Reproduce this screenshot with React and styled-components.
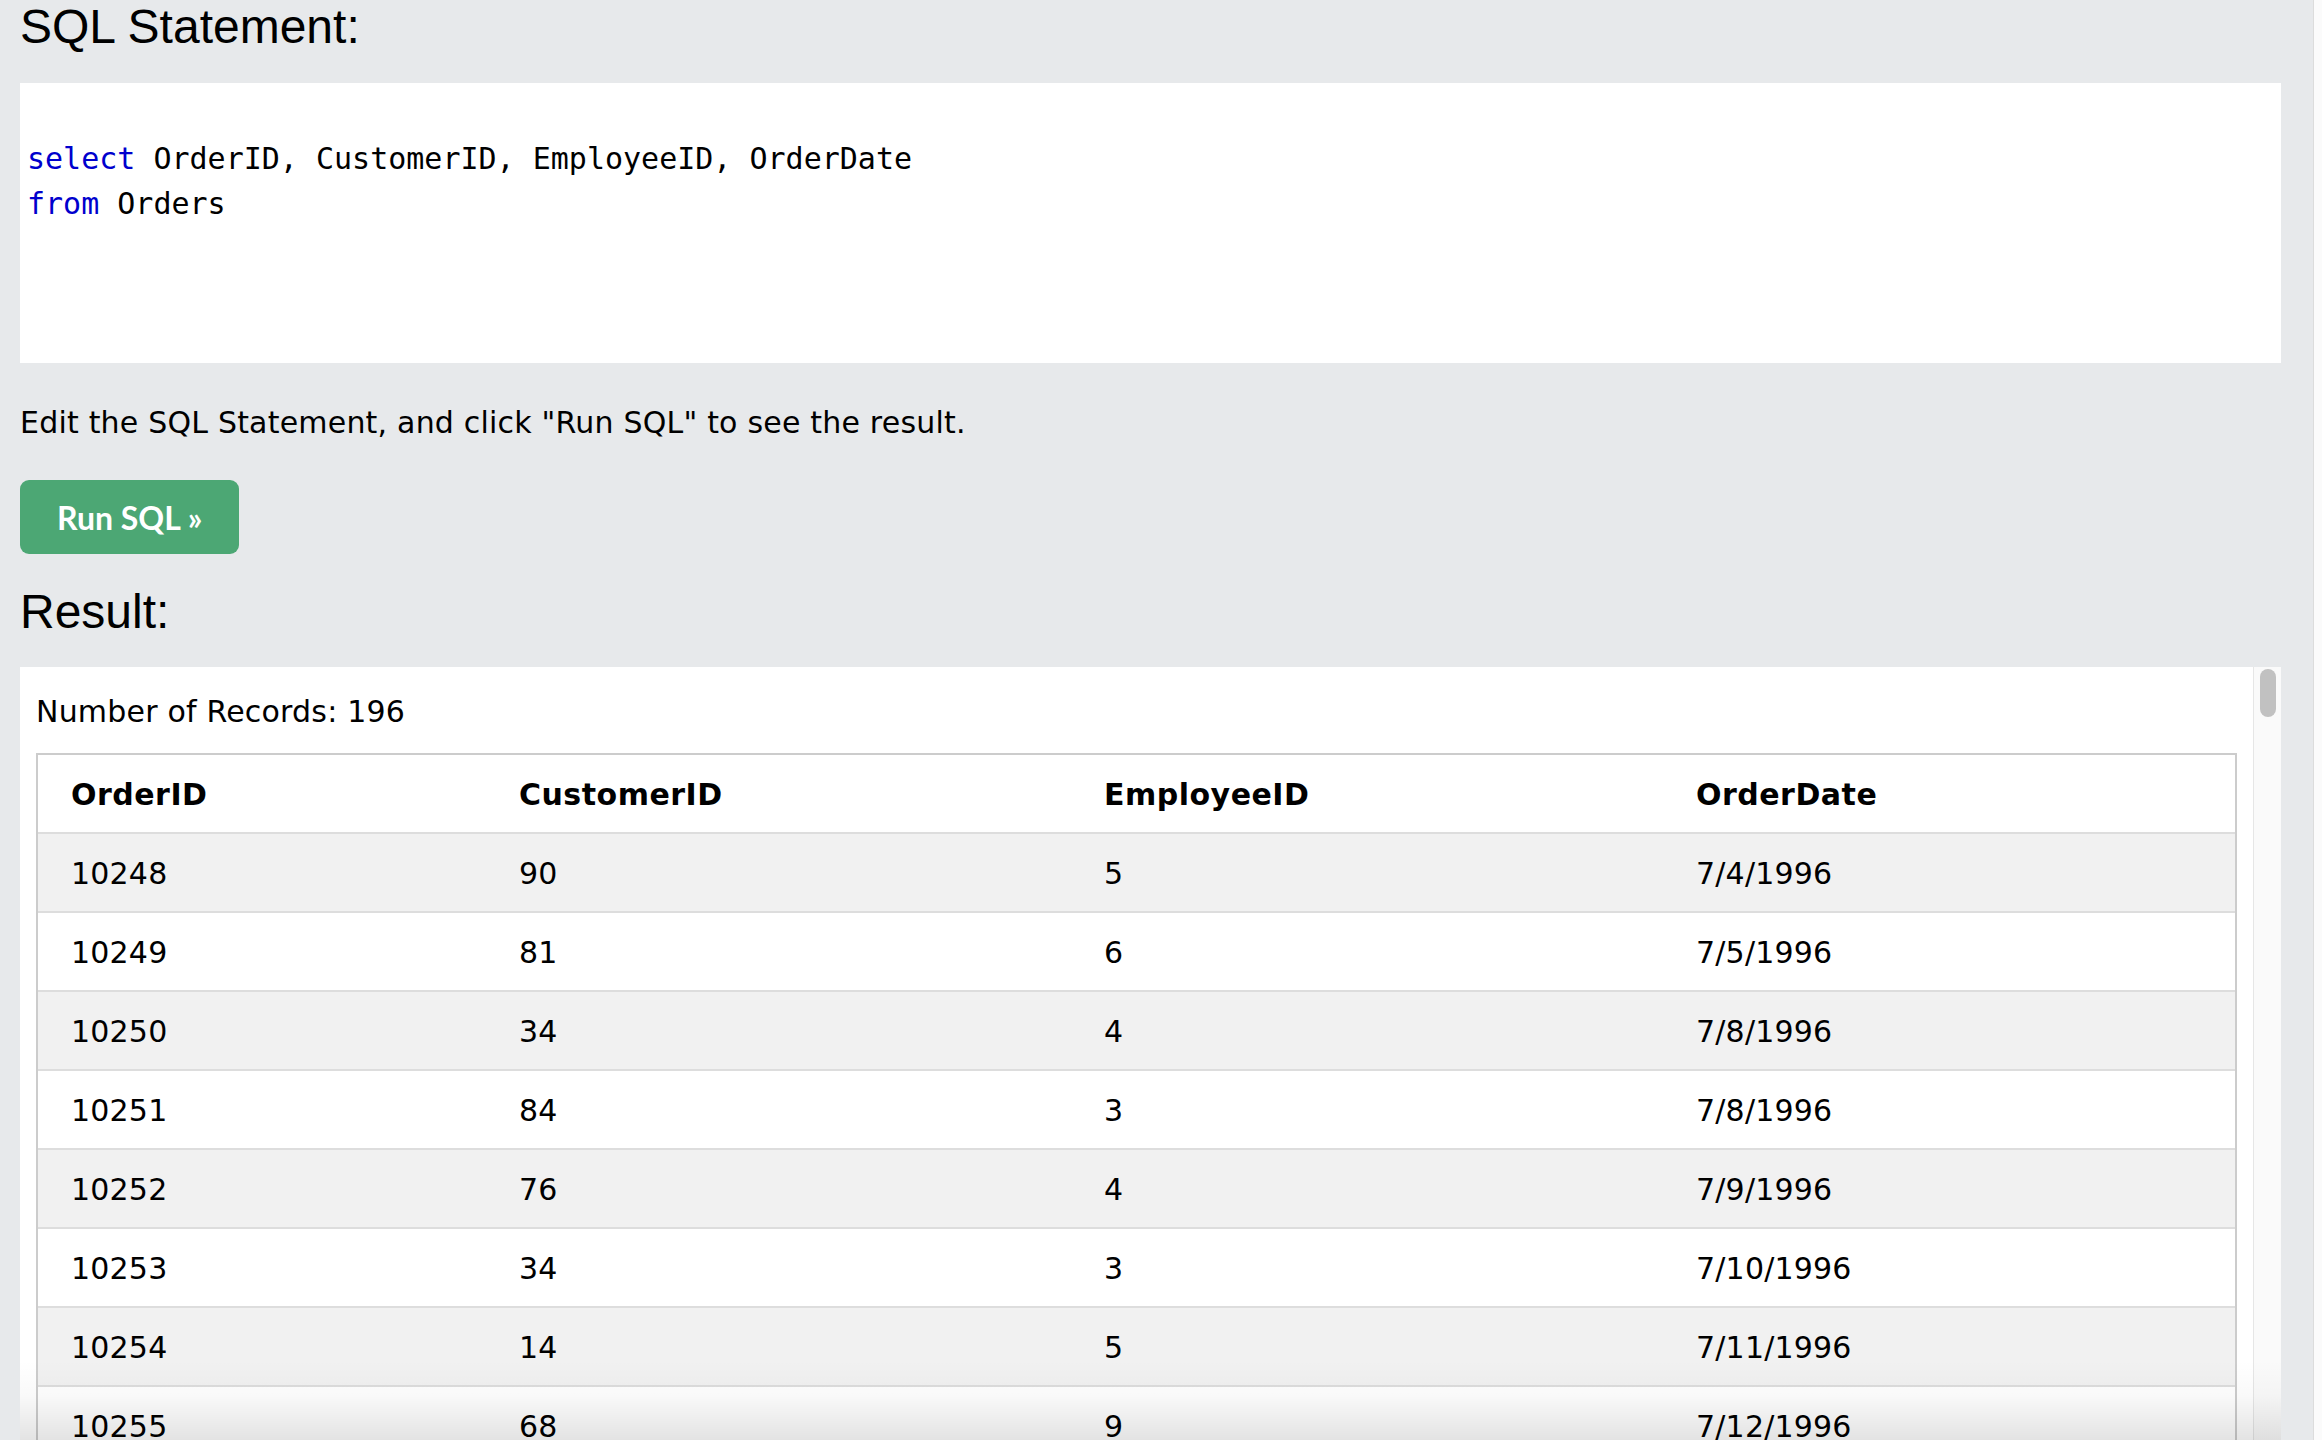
import styled, { createGlobalStyle } from "styled-components"

const GlobalStyle = createGlobalStyle`
  html, body {
    margin: 0;
    padding: 0;
    height: 100%;
    overflow: hidden;
    background: #e7e9eb;
  }
  * {
    box-sizing: border-box;
  }
`

const columns = [
  { key: "id", label: "OrderID", width: 448 },
  { key: "customer", label: "CustomerID", width: 585 },
  { key: "employee", label: "EmployeeID", width: 592 },
  { key: "date", label: "OrderDate" },
]

const orders = [
  { id: 10248, customer: 90, employee: 5, date: "7/4/1996" },
  { id: 10249, customer: 81, employee: 6, date: "7/5/1996" },
  { id: 10250, customer: 34, employee: 4, date: "7/8/1996" },
  { id: 10251, customer: 84, employee: 3, date: "7/8/1996" },
  { id: 10252, customer: 76, employee: 4, date: "7/9/1996" },
  { id: 10253, customer: 34, employee: 3, date: "7/10/1996" },
  { id: 10254, customer: 14, employee: 5, date: "7/11/1996" },
  { id: 10255, customer: 68, employee: 9, date: "7/12/1996" },
  { id: 10256, customer: 88, employee: 3, date: "7/15/1996" },
  { id: 10257, customer: 35, employee: 4, date: "7/16/1996" },
]

const App = () => {
  return (
    <PageStyled>
      <GlobalStyle />
      <Main>
        <Heading>SQL Statement:</Heading>
        <CodeBox>
          <CodeLine>
            <Keyword>select</Keyword> OrderID, CustomerID, EmployeeID, OrderDate
          </CodeLine>
          <CodeLine>
            <Keyword>from</Keyword> Orders
          </CodeLine>
        </CodeBox>
        <Hint>Edit the SQL Statement, and click "Run SQL" to see the result.</Hint>
        <RunButton>Run SQL »</RunButton>
        <Heading $top={31}>Result:</Heading>
        <ResultPanel>
          <ResultBody>
            <RecordCount>Number of Records: 196</RecordCount>
            <ResultTable>
              <thead>
                <tr>
                  {columns.map((col) => (
                    <HeadCell key={col.key} $width={col.width}>
                      {col.label}
                    </HeadCell>
                  ))}
                </tr>
              </thead>
              <tbody>
                {orders.map((row, i) => (
                  <Row key={row.id} $striped={i % 2 === 0}>
                    {columns.map((col) => (
                      <Cell key={col.key}>{row[col.key]}</Cell>
                    ))}
                  </Row>
                ))}
              </tbody>
            </ResultTable>
          </ResultBody>
          <Track>
            <Thumb />
          </Track>
          <BottomShade />
        </ResultPanel>
      </Main>
      <PageScrollbar />
    </PageStyled>
  )
}
export default App

const PageStyled = styled.div`
  display: flex;
  width: 100vw;
  height: 100vh;
  background: #e7e9eb;
  color: #000;
`

const Main = styled.div`
  flex: 1;
  display: flex;
  flex-direction: column;
  padding: 0 32px 0 20px;
  min-width: 0;
`

const Heading = styled.h3`
  margin: ${(p) => p.$top || 0}px 0 0 0;
  font-family: "Liberation Sans", Arial, sans-serif;
  font-size: 48px;
  font-weight: 400;
  line-height: 54px;
`

const CodeBox = styled.div`
  margin-top: 29px;
  height: 280px;
  padding: 53px 7px 0 7px;
  background: #fff;
  font-family: "DejaVu Sans Mono", monospace;
  font-size: 30px;
  line-height: 45px;
  color: #000;
`

const CodeLine = styled.div`
  white-space: pre;
`

const Keyword = styled.span`
  color: #0000cd;
`

const Hint = styled.p`
  margin: 38px 0 0 0;
  font-family: "DejaVu Sans", Verdana, sans-serif;
  font-size: 30px;
  letter-spacing: 0.2px;
  line-height: 44px;
`

const RunButton = styled.button`
  align-self: flex-start;
  margin-top: 35px;
  height: 74px;
  padding: 0 37px;
  border: none;
  border-radius: 9px;
  background: #4ca774;
  color: #fff;
  font-family: Lato, "Open Sans", sans-serif;
  font-size: 32px;
  font-weight: 700;
  cursor: pointer;
`

const ResultPanel = styled.div`
  position: relative;
  flex: 1;
  display: flex;
  margin-top: 28px;
  background: #fff;
  overflow: hidden;
`

const ResultBody = styled.div`
  flex: 1;
  min-width: 0;
  padding: 23px 16px 0 16px;
`

const RecordCount = styled.div`
  font-family: "DejaVu Sans", Verdana, sans-serif;
  font-size: 30px;
  letter-spacing: 0.2px;
  line-height: 44px;
`

const ResultTable = styled.table`
  width: 100%;
  margin-top: 19px;
  table-layout: fixed;
  border-collapse: separate;
  border-spacing: 0;
  border: 2px solid #cccccc;
  font-family: "DejaVu Sans", Verdana, sans-serif;
  font-size: 30px;
  letter-spacing: 0.2px;
`

const HeadCell = styled.th`
  width: ${(p) => (p.$width ? `${p.$width}px` : "auto")};
  padding: 22px 0 20px 33px;
  border-bottom: 2px solid #dddddd;
  line-height: 35px;
  text-align: left;
  font-weight: 700;
  letter-spacing: 0.5px;
  background: #fff;
`

const Row = styled.tr`
  background: ${(p) => (p.$striped ? "#f1f1f1" : "#ffffff")};
`

const Cell = styled.td`
  padding: 22px 0 20px 33px;
  border-bottom: 2px solid #dddddd;
  line-height: 35px;
  text-align: left;
`

const Track = styled.div`
  flex: 0 0 28px;
  display: flex;
  justify-content: center;
  padding-top: 2px;
  border-left: 1px solid #e6e6e6;
  background: #fafafa;
`

const Thumb = styled.div`
  width: 16px;
  height: 48px;
  border-radius: 8px;
  background: #c1c1c1;
`

const BottomShade = styled.div`
  position: absolute;
  left: 0;
  right: 0;
  bottom: 0;
  height: 80px;
  pointer-events: none;
  background: linear-gradient(to bottom, rgba(0, 0, 0, 0) 0%, rgba(0, 0, 0, 0.025) 45%, rgba(0, 0, 0, 0.11) 100%);
`

const PageScrollbar = styled.div`
  flex: 0 0 9px;
  border-left: 1px solid #dcdcdc;
  background: #fbfbfb;
`
